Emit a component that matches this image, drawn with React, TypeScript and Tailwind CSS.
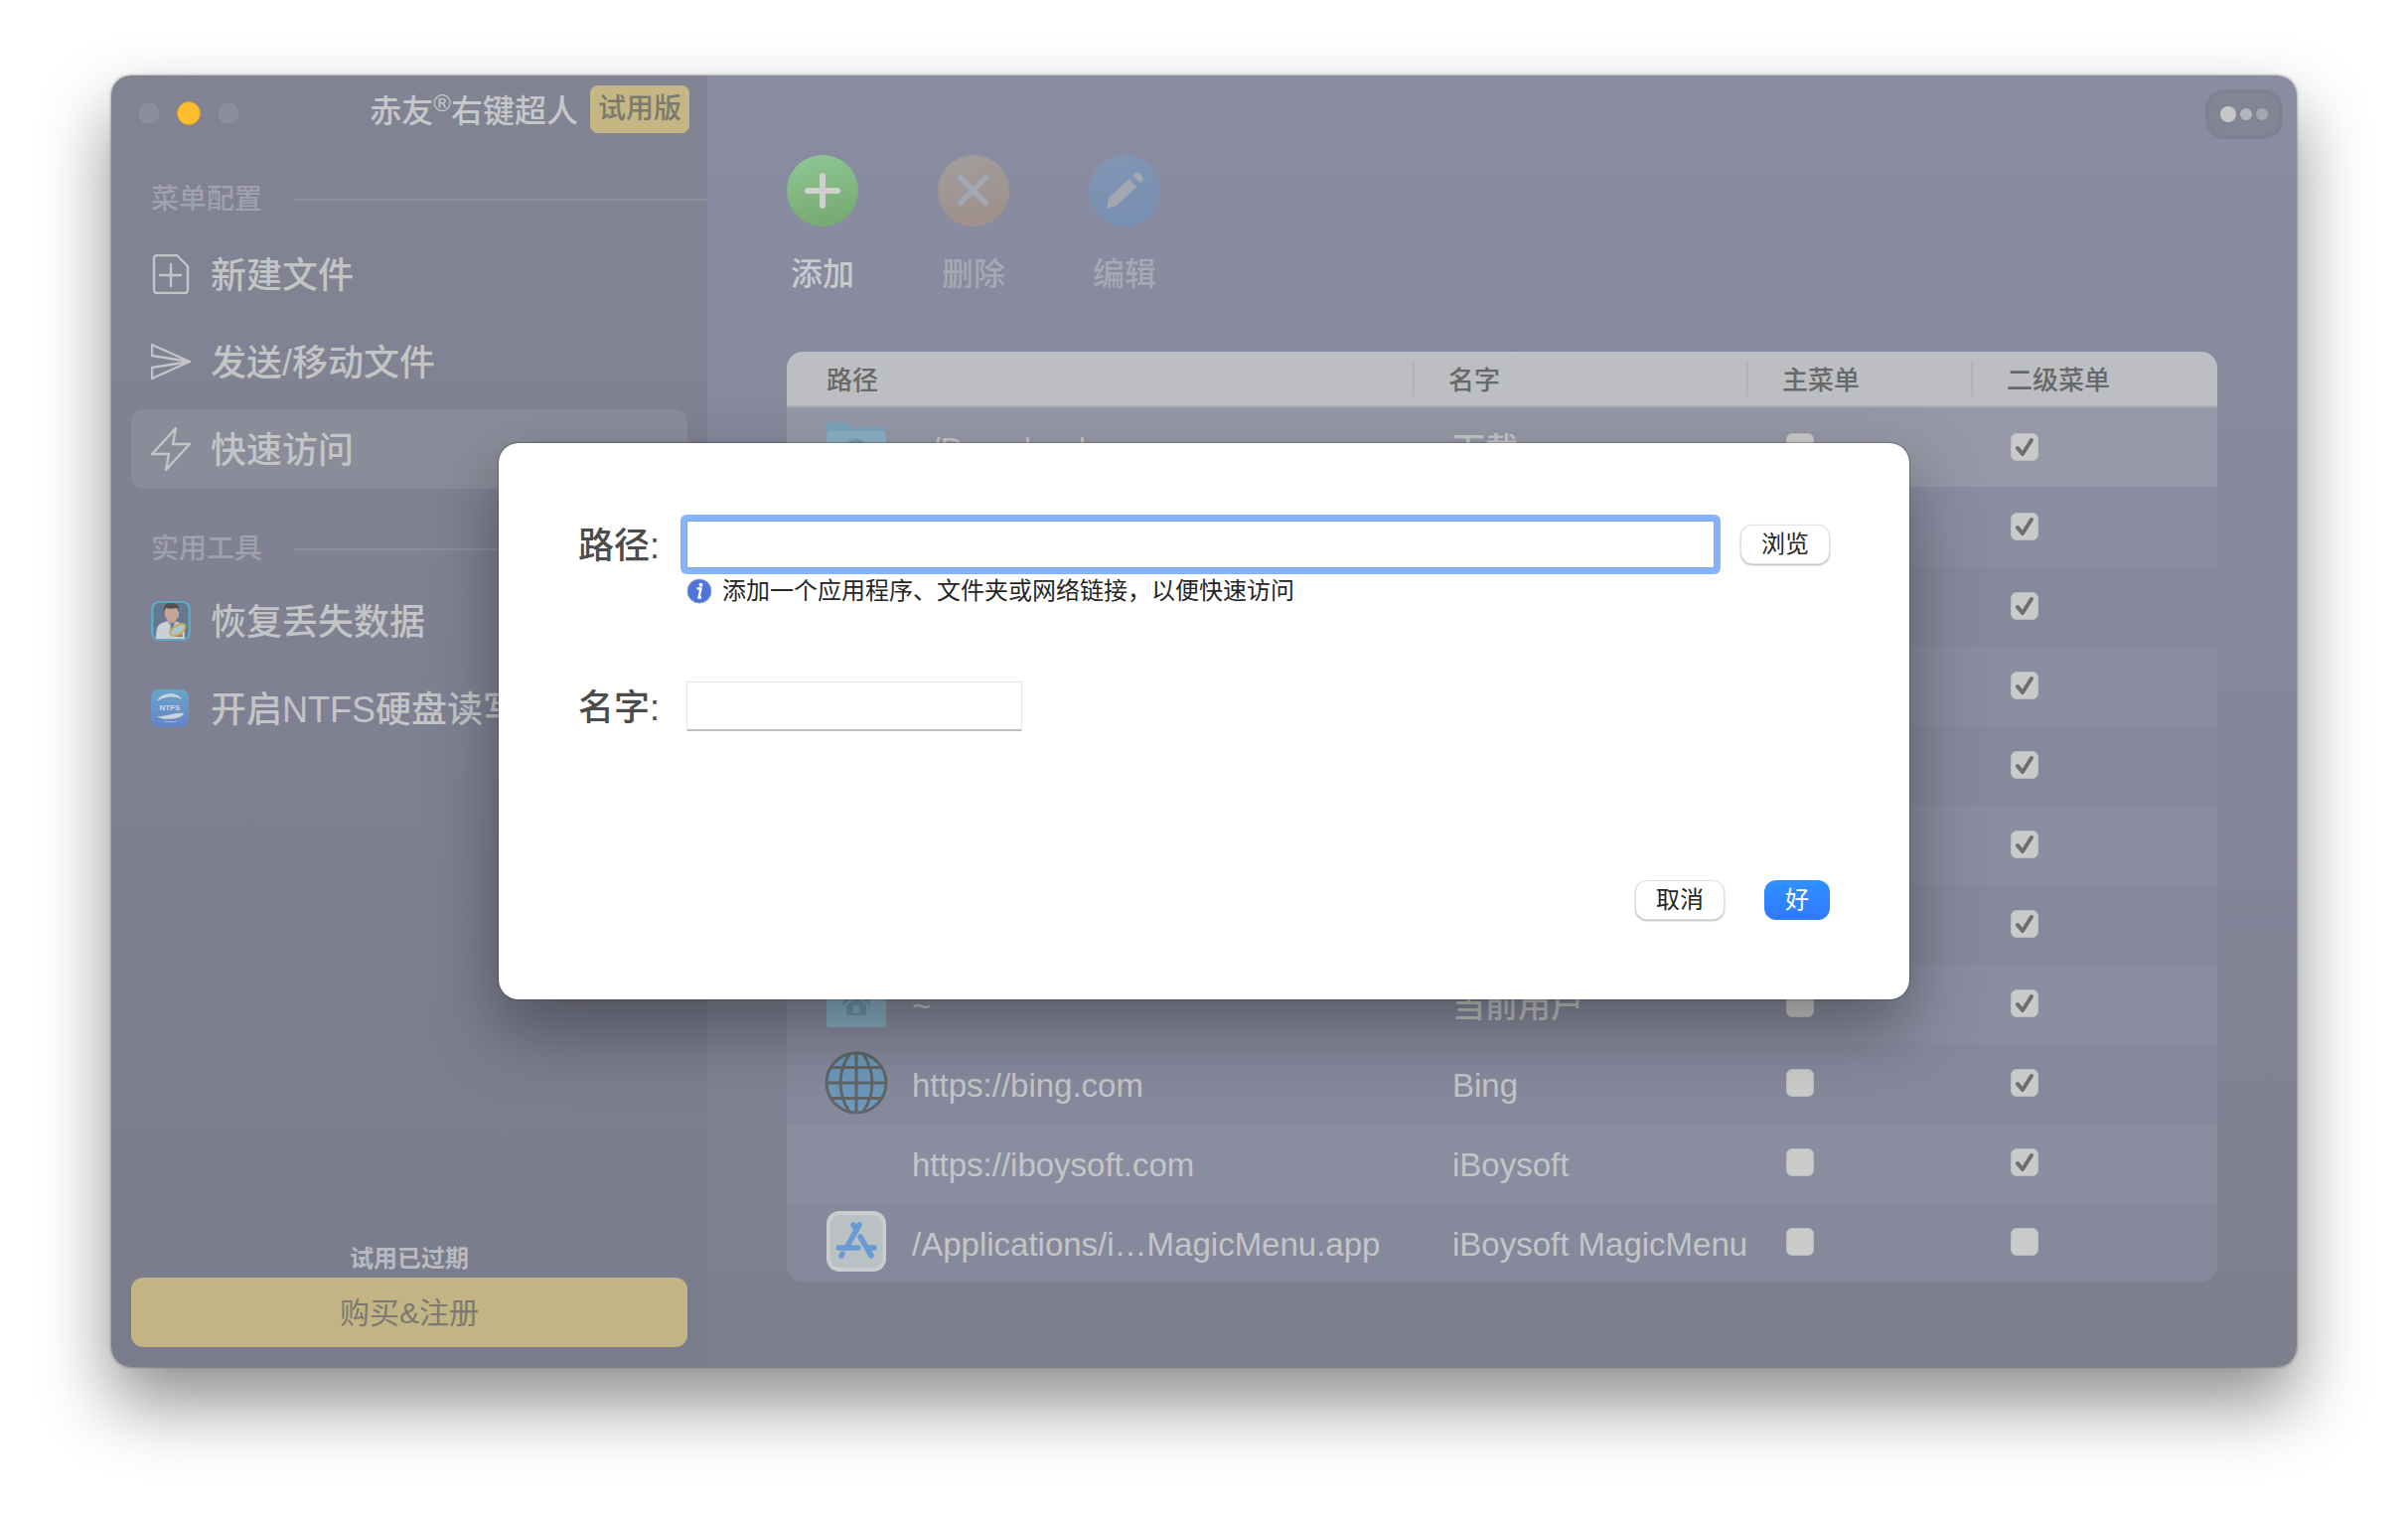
import React from "react";

type Row = { icon?: "downloads" | "home" | "globe" | "app"; path: string; name: string; main: boolean; sub: boolean };

const rows: Row[] = [
  { icon: "downloads", path: "~/Downloads", name: "下载", main: false, sub: true },
  { path: "", name: "", main: false, sub: true },
  { path: "", name: "", main: false, sub: true },
  { path: "", name: "", main: false, sub: true },
  { path: "", name: "", main: false, sub: true },
  { path: "", name: "", main: false, sub: true },
  { path: "", name: "", main: false, sub: true },
  { icon: "home", path: "~", name: "当前用户", main: false, sub: true },
  { icon: "globe", path: "https://bing.com", name: "Bing", main: false, sub: true },
  { path: "https://iboysoft.com", name: "iBoysoft", main: false, sub: true },
  { icon: "app", path: "/Applications/i…MagicMenu.app", name: "iBoysoft MagicMenu", main: false, sub: false },
];

function NewFileIcon() {
  return (
    <svg viewBox="0 0 40 40" className="size-10 shrink-0" fill="none" stroke="#c3c4c6" strokeWidth="2.400" strokeLinejoin="round" strokeLinecap="round">
      <path d="M6 1h20l11 11v24a3 3 0 0 1-3 3H6a3 3 0 0 1-3-3V4a3 3 0 0 1 3-3z" />
      <path d="M20 10v22M9 21h21" />
    </svg>
  );
}

function SendIcon() {
  return (
    <svg viewBox="0 0 40 40" className="size-10 shrink-0" fill="none" stroke="#c3c4c6" strokeWidth="2.400" strokeLinejoin="round">
      <path d="M1 3l38 17L1 37V26l38-6L1 14z" />
    </svg>
  );
}

function BoltIcon() {
  return (
    <svg viewBox="0 0 40 44" className="h-11 w-10 shrink-0" fill="none" stroke="#c3c4c6" strokeWidth="2.400" strokeLinejoin="round">
      <path d="M25 1L1 27h17l-3 16 24-26H22z" />
    </svg>
  );
}

function DoctorIcon() {
  return (
    <svg viewBox="0 0 40 40" className="size-10 shrink-0">
      <rect width="40" height="40" rx="8" fill="#5fa9c3" />
      <rect x="2.500" y="2" width="35" height="36" rx="6" fill="#64788f" />
      <path d="M5 38c0-9 1-14 6-16l6-2h7l5 2c4 2 5 6 5 16z" fill="#cbced2" />
      <path d="M17 19h8v3l-4 4-4-4z" fill="#b79c8e" />
      <path d="M20 22h3l1 10-2 3-3-3z" fill="#557fae" />
      <path d="M14 7h14v7c0 4-4 6-7 6s-7-2-7-6z" fill="#c3a697" />
      <path d="M13 11c-1-6 2-9 6-9s10-1 9 9l-2-4c-4 1-8 1-11 0z" fill="#54504f" />
      <path d="M24 36h8l-1-5-6 1z" fill="#8b8075" />
      <ellipse cx="27" cy="29" rx="8.500" ry="4.500" transform="rotate(-32 27 29)" fill="#a8c8cf" stroke="#c9a55a" strokeWidth="2" />
    </svg>
  );
}

function NtfsIcon() {
  return (
    <svg viewBox="0 0 40 40" className="size-10 shrink-0">
      <defs>
        <linearGradient id="ntfs" x1="0" y1="0" x2="0" y2="1">
          <stop offset="0" stopColor="#6aa5c9" />
          <stop offset="1" stopColor="#6484c6" />
        </linearGradient>
      </defs>
      <rect x="0" y="1" width="38" height="38" rx="8" fill="url(#ntfs)" />
      <path d="M6 13C10 3 27 3 31 11 24 7 13 8 6 13z" fill="#cdd3da" />
      <path d="M6 28c8 1 17-4 27-3-1 6-22 8-27 3z" fill="#cdd3da" />
      <path d="M12 32c5 2 11 2 15 0-3 3-12 3-15 0z" fill="#cdd3da" />
      <text x="19" y="22" textAnchor="middle" fontSize="8" fontWeight="700" fontFamily="Liberation Sans, sans-serif" fill="#d3d7dc">NTFS</text>
      <path d="M6 36h1M10 36h1M27 36h1M31 36h1" stroke="#4a68ad" />
    </svg>
  );
}

function AddIcon() {
  return (
    <svg viewBox="0 0 72 72" className="size-[72px]">
      <defs>
        <linearGradient id="add" x1="0" y1="0" x2="0.2" y2="1">
          <stop offset="0" stopColor="#8fc795" />
          <stop offset="1" stopColor="#78ab73" />
        </linearGradient>
      </defs>
      <circle cx="36" cy="36" r="36" fill="url(#add)" />
      <path d="M36 21v30M21 36h30" stroke="#cfcfcf" strokeWidth="6" strokeLinecap="round" />
    </svg>
  );
}

function DeleteIcon() {
  return (
    <svg viewBox="0 0 72 72" className="size-[72px]">
      <defs>
        <linearGradient id="del" x1="0" y1="0" x2="0.2" y2="1">
          <stop offset="0" stopColor="#a19d9d" />
          <stop offset="1" stopColor="#9f918c" />
        </linearGradient>
      </defs>
      <circle cx="36" cy="36" r="36" fill="url(#del)" />
      <path d="M23 23l25 25M48 23L23 48" stroke="#a2a7b2" strokeWidth="6" strokeLinecap="round" />
    </svg>
  );
}

function EditIcon() {
  return (
    <svg viewBox="0 0 72 72" className="size-[72px]">
      <defs>
        <linearGradient id="edit" x1="0" y1="0" x2="0.2" y2="1">
          <stop offset="0" stopColor="#8295b5" />
          <stop offset="1" stopColor="#7890b2" />
        </linearGradient>
      </defs>
      <circle cx="36" cy="36" r="36" fill="url(#edit)" />
      <path d="M18 54l2-11 21-19 7 8-20 19z" fill="#a2a7b2" />
      <path d="M44 21c3-4 7-4 9-1s2 5-1 8z" fill="#a2a7b2" />
    </svg>
  );
}

function FolderIcon({ kind }: { kind: "downloads" | "home" }) {
  return (
    <svg viewBox="0 0 64 64" className="size-16">
      <path d="M2 11a4 4 0 0 1 4-4h13c4 0 5 5 9 5h30a4 4 0 0 1 4 4v8H2z" fill="#7aa5bc" />
      <path d="M2 16h60v8H2z" fill="#6593ad" />
      <path d="M2 19a3 3 0 0 1 3-3h54a3 3 0 0 1 3 3v34a3 3 0 0 1-3 3H5a3 3 0 0 1-3-3z" fill="#8bb0c4" />
      {kind === "home" ? (
        <g fill="#6f9ab1">
          <path d="M32 19l15 13-2 2-13-11-13 11-2-2z" />
          <path d="M32 25l10 9v8a2 2 0 0 1-2 2H24a2 2 0 0 1-2-2v-8z" />
          <path d="M29 34h6v8h-6z" fill="#8bb0c4" />
        </g>
      ) : (
        <circle cx="32" cy="35" r="11" fill="#6f9ab4" />
      )}
    </svg>
  );
}

function GlobeIcon() {
  return (
    <svg viewBox="0 0 64 64" className="size-16" fill="none" stroke="#616566" strokeWidth="3">
      <circle cx="32" cy="32" r="30" fill="#6c98bb" />
      <path d="M32 2v60M2 32h60M7 16.500h50M7 47.500h50" />
      <path d="M25 3c-12 18-12 40 0 58M39 3c12 18 12 40 0 58" />
    </svg>
  );
}

function AppIcon() {
  return (
    <svg viewBox="0 0 64 64" className="size-16">
      <rect x="2" y="1" width="60" height="61" rx="13" fill="#cbcdcd" />
      <rect x="5.500" y="5" width="53" height="53" rx="10" fill="#b9c1c5" />
      <g stroke="#699bd2" strokeWidth="5.500" strokeLinecap="round" fill="none">
        <path d="M35 15L22 38M18 44l-1 2" />
        <path d="M29 15l2 3M36 27l11 19" />
        <path d="M14 38h20M43 38h7" />
      </g>
    </svg>
  );
}

function RowIcon({ icon }: { icon?: Row["icon"] }) {
  if (icon === "downloads" || icon === "home") return <FolderIcon kind={icon} />;
  if (icon === "globe") return <GlobeIcon />;
  if (icon === "app") return <AppIcon />;
  return null;
}

function Check({ label, checked }: { label: string; checked: boolean }) {
  return (
    <span className="grid size-7">
      <input
        type="checkbox"
        aria-label={label}
        defaultChecked={checked}
        className="peer col-start-1 row-start-1 size-7 appearance-none rounded-md border border-[#bcbdbf] bg-[#cacaca]"
      />
      <svg viewBox="0 0 28 28" className="pointer-events-none invisible col-start-1 row-start-1 size-7 peer-checked:visible" fill="none" stroke="#6e6e6e" strokeWidth="4" strokeLinecap="round" strokeLinejoin="round">
        <path d="M7 15l5 6 9-14" />
      </svg>
    </span>
  );
}

function SectionTitle({ children }: { children: React.ReactNode }) {
  return (
    <div className="flex h-10 items-center gap-8 pl-10">
      <h2 className="text-[28px] leading-10 font-medium text-[#a0a1ac]">{children}</h2>
      <div className="h-0.5 flex-1 bg-[#8e8f9d]" />
    </div>
  );
}

function NavItem({ icon, label, active }: { icon: React.ReactNode; label: string; active?: boolean }) {
  return (
    <button
      className={
        active
          ? "flex h-20 items-center gap-5 rounded-xl bg-[#8a8c99] px-5 text-left text-4xl font-medium whitespace-nowrap text-[#c3c4c6]"
          : "flex h-20 items-center gap-5 rounded-xl px-5 text-left text-4xl font-medium whitespace-nowrap text-[#c3c4c6]"
      }
    >
      {icon}
      <span className="pt-1">{label}</span>
    </button>
  );
}

function Tool({ icon, label, disabled }: { icon: React.ReactNode; label: string; disabled?: boolean }) {
  return (
    <button disabled={disabled} className="flex w-[72px] flex-col items-center gap-[26px] text-[32px] leading-[44px] font-medium text-[#c9cacb] disabled:text-[#a6a9b4]">
      {icon}
      {label}
    </button>
  );
}

function Sidebar() {
  return (
    <aside className="flex w-[600px] shrink-0 flex-col bg-linear-to-b from-[#828392] via-[#7f8092] to-[#7a7b8b]">
      <header className="flex h-[76px] items-center pl-[26px] pr-[18px]">
        <div className="flex gap-4">
          <button aria-label="关闭" className="size-6 rounded-full border border-[#7d7e8c] bg-[#8d8e9c]" />
          <button aria-label="最小化" className="size-6 rounded-full border border-[#dba12c] bg-[#fdbd2e]" />
          <button aria-label="缩放" className="size-6 rounded-full border border-[#7d7e8c] bg-[#8d8e9c]" />
        </div>
        <h1 className="mb-1 ml-auto flex text-[32px] leading-[46px] font-medium text-[#c6c7c9]">
          赤友<span className="-mt-2 text-2xl leading-[46px]">®</span>右键超人
        </h1>
        <span className="mb-2 ml-3 rounded-lg bg-[#c5b783] px-2 text-[28px] leading-[48px] font-medium text-[#7b7970]">试用版</span>
      </header>
      <div className="mt-[29px]">
        <SectionTitle>菜单配置</SectionTitle>
      </div>
      <nav className="mx-5 mt-[15px] flex flex-col gap-2">
        <NavItem icon={<NewFileIcon />} label="新建文件" />
        <NavItem icon={<SendIcon />} label="发送/移动文件" />
        <NavItem icon={<BoltIcon />} label="快速访问" active />
      </nav>
      <div className="mt-[41px]">
        <SectionTitle>实用工具</SectionTitle>
      </div>
      <nav className="mx-5 mt-3 flex flex-col gap-2">
        <NavItem icon={<DoctorIcon />} label="恢复丢失数据" />
        <NavItem icon={<NtfsIcon />} label="开启NTFS硬盘读写" />
      </nav>
      <footer className="mx-5 mt-auto mb-5 flex flex-col">
        <p className="text-center text-2xl leading-[38px] font-bold text-[#b9bac0]">试用已过期</p>
        <button className="h-[70px] rounded-xl bg-[#c2b485] text-[30px] text-[#7b7970]">购买&注册</button>
      </footer>
    </aside>
  );
}

function PathTable() {
  return (
    <table className="w-full table-fixed border-separate border-spacing-0 overflow-hidden rounded-2xl text-left">
      <colgroup>
        <col />
        <col className="w-[336px]" />
        <col className="w-[226px]" />
        <col className="w-[248px]" />
      </colgroup>
      <thead className="bg-[#bdbec1] text-[26px] text-[#686868]">
        <tr className="h-14">
          {["路径", "名字", "主菜单", "二级菜单"].map((title, i) => (
            <th key={title} className="border-b-2 border-[#aeafb4] p-0 font-medium">
              <div className={i === 0 ? "pt-1 pl-10 leading-8" : "border-l-2 border-[#b3b4b8] pt-1 pl-[34px] leading-8"}>{title}</div>
            </th>
          ))}
        </tr>
      </thead>
      <tbody className="text-[33px] font-medium text-[#c4c5c6]">
        {rows.map((row, i) => (
          <tr key={i} className="h-20 first:bg-[#9798a7] odd:not-first:bg-[#86899c] even:bg-[#8a8da0]">
            <td className="p-0">
              <div className="flex items-center gap-6 pl-[38px]">
                <div className="size-16 shrink-0">
                  <RowIcon icon={row.icon} />
                </div>
                <span className="pt-[6px] whitespace-nowrap">{row.path}</span>
              </div>
            </td>
            <td className="p-0 pt-[6px] pl-10 whitespace-nowrap">{row.name}</td>
            <td className="p-0 pl-10">
              <Check label="主菜单" checked={row.main} />
            </td>
            <td className="p-0 pl-10">
              <Check label="二级菜单" checked={row.sub} />
            </td>
          </tr>
        ))}
      </tbody>
    </table>
  );
}

const plainButton = "h-10 rounded-xl border border-[#e0e0e0] bg-white px-5 text-2xl leading-9 text-[#262626] shadow-[0_1px_2px_rgba(0,0,0,0.3)]";

function PathDialog() {
  return (
    <form
      role="dialog"
      aria-label="添加"
      onSubmit={(e) => e.preventDefault()}
      className="absolute inset-x-[390px] top-[370px] flex h-[560px] flex-col rounded-[20px] bg-white px-20 pt-[78px] pb-20 shadow-[0_0_2px_rgba(0,0,0,0.7),0_30px_70px_rgba(0,0,0,0.36)]"
    >
      <div className="flex items-center">
        <label htmlFor="path" className="w-[109px] shrink-0 pt-1 text-4xl font-medium text-[#4c4c4c]">路径:</label>
        <input id="path" type="text" className="h-12 min-w-0 flex-1 rounded-xs border border-[#78a5e6] bg-white px-2 text-3xl outline-none ring-6 ring-[#87b3f9]" />
        <button type="button" className={plainButton + " ml-[26px] shrink-0"}>浏览</button>
      </div>
      <p className="mt-[2px] flex items-center gap-[10px] pl-[109px] text-2xl leading-[42px] text-[#262626]">
        <svg viewBox="0 0 26 26" className="size-[26px]">
          <circle cx="13" cy="13" r="12" fill="#4f74dc" stroke="#93a0c4" />
          <circle cx="14.500" cy="6.800" r="2" fill="#fff" />
          <path d="M10.500 10.500h4l-2 9h2.500" fill="none" stroke="#fff" strokeWidth="2.400" />
        </svg>
        添加一个应用程序、文件夹或网络链接，以便快速访问
      </p>
      <div className="mt-[70px] flex items-center">
        <label htmlFor="name" className="w-[109px] shrink-0 pt-1 text-4xl font-medium text-[#4c4c4c]">名字:</label>
        <input id="name" type="text" className="h-[50px] w-[338px] border border-b-2 border-[#e6e6e6] border-b-[#c0c0c0] bg-white px-2 text-3xl outline-none" />
      </div>
      <div className="mt-auto flex justify-end gap-10">
        <button type="button" className={plainButton}>取消</button>
        <button type="submit" className="h-10 rounded-xl bg-linear-to-b from-[#2f92ff] to-[#2f78ff] px-[21px] text-2xl leading-10 text-white">好</button>
      </div>
    </form>
  );
}

export default function App() {
  return (
    <div className="flex min-h-screen bg-white px-28 pt-[76px] pb-[148px] font-['Liberation_Sans','Noto_Sans_CJK_SC',sans-serif]" lang="zh-CN">
      <div className="relative flex flex-1 rounded-[20px] shadow-[0_0_3px_rgba(0,0,0,0.5),0_36px_72px_rgba(0,0,0,0.45)]">
        <div className="flex flex-1 overflow-hidden rounded-[20px]">
          <Sidebar />
          <main className="flex flex-1 flex-col bg-linear-to-b from-[#8a8ca1] via-[#84879a] to-[#7d7f8d] px-20">
            <div className="-mr-[66px] flex h-20 items-start justify-end pt-[14px]">
              <button aria-label="更多" className="flex h-[50px] w-[78px] items-center justify-center gap-1 rounded-[20px] border-4 border-[#808190] bg-[#838494]">
                <span className="size-4 rounded-full bg-[#c6c7c9]" />
                <span className="size-3 rounded-full bg-[#b5b6bd]" />
                <span className="size-3 rounded-full bg-[#a4a6b0]" />
              </button>
            </div>
            <div className="mb-14 flex gap-20">
              <Tool icon={<AddIcon />} label="添加" />
              <Tool icon={<DeleteIcon />} label="删除" disabled />
              <Tool icon={<EditIcon />} label="编辑" disabled />
            </div>
            <PathTable />
          </main>
        </div>
        <PathDialog />
      </div>
    </div>
  );
}
